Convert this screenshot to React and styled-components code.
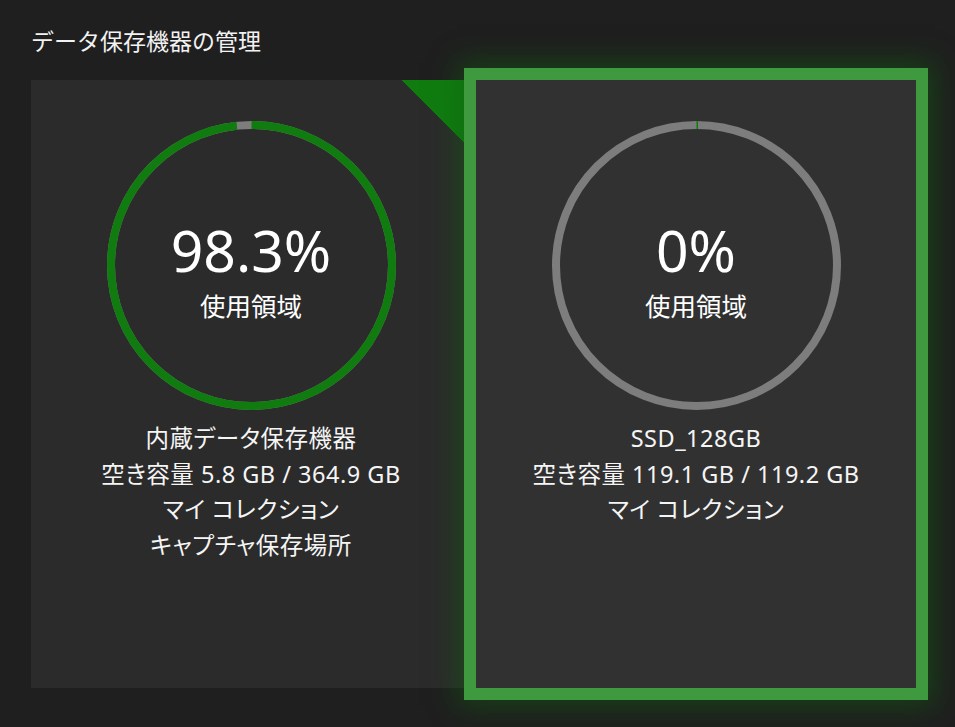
import React from 'react';
import styled, { createGlobalStyle } from 'styled-components';

const GlobalStyle = createGlobalStyle`
  html, body {
    margin: 0;
    background: #1f1f1f;
  }
  body {
    font-family: "Noto Sans", "Noto Sans CJK JP", sans-serif;
    color: #ffffff;
  }
`;

const RING = 289;
const STROKE = 8;

const drives = [
  {
    id: 'internal',
    used: 98.3,
    label: '98.3%',
    lines: ['内蔵データ保存機器', '空き容量 5.8 GB / 364.9 GB', 'マイ コレクション', 'キャプチャ保存場所'],
    corner: true,
  },
  {
    id: 'ssd',
    used: 0,
    label: '0%',
    lines: ['SSD_128GB', '空き容量 119.1 GB / 119.2 GB', 'マイ コレクション'],
    selected: true,
  },
];

const UsageRing = ({ used }) => {
  const r = (RING - STROKE) / 2;
  const c = 2 * Math.PI * r;
  const arc = used > 0 ? (c * used) / 100 : 1.5;
  return (
    <svg width={RING} height={RING} viewBox={`0 0 ${RING} ${RING}`}>
      <circle cx={RING / 2} cy={RING / 2} r={r} fill="none" stroke="#7d7d7d" strokeWidth={STROKE} />
      <circle
        cx={RING / 2}
        cy={RING / 2}
        r={r}
        fill="none"
        stroke="#107c10"
        strokeWidth={STROKE}
        strokeDasharray={`${arc} ${c}`}
        transform={`rotate(-90 ${RING / 2} ${RING / 2})`}
      />
    </svg>
  );
};

export default function App() {
  return (
    <>
      <GlobalStyle />
      <Page>
        <Title>データ保存機器の管理</Title>
        <CardRow>
          {drives.map((d) => (
            <DriveCard key={d.id} $selected={d.selected} $corner={d.corner}>
              <RingWrap>
                <UsageRing used={d.used} />
                <RingText>
                  <Percent>{d.label}</Percent>
                  <UsedLabel>使用領域</UsedLabel>
                </RingText>
              </RingWrap>
              <Details>
                {d.lines.map((l) => (
                  <div key={l}>{l}</div>
                ))}
              </Details>
            </DriveCard>
          ))}
        </CardRow>
      </Page>
    </>
  );
}

const Page = styled.div`
  padding: 26px 31px 0;
  height: 727px;
  box-sizing: border-box;
  overflow: hidden;
`;

const Title = styled.h1`
  margin: 0 0 24px;
  font-size: 23px;
  line-height: 30px;
  font-weight: 400;
  color: #f2f2f2;
`;

const CardRow = styled.div`
  display: flex;
  gap: 5px;
`;

const DriveCard = styled.div`
  position: relative;
  width: 440px;
  height: 608px;
  box-sizing: border-box;
  padding-top: 41px;
  display: flex;
  flex-direction: column;
  align-items: center;
  background: ${(p) => (p.$selected ? '#313131' : '#2b2b2b')};
  z-index: ${(p) => (p.$selected ? 2 : 1)};
  box-shadow: ${(p) =>
    p.$selected
      ? '0 0 0 12px #3f9a3f, 0 0 26px 18px rgba(16, 100, 16, 0.5)'
      : 'none'};

  &::after {
    content: '';
    display: ${(p) => (p.$corner ? 'block' : 'none')};
    position: absolute;
    top: 0;
    right: 0;
    width: 70px;
    height: 70px;
    background: linear-gradient(45deg, transparent 50%, #107c10 50%);
  }
`;

const RingWrap = styled.div`
  display: grid;
  width: ${RING}px;
  height: ${RING}px;
  & > * {
    grid-area: 1 / 1;
  }
`;

const RingText = styled.div`
  display: flex;
  flex-direction: column;
  align-items: center;
  justify-content: center;
  padding-top: 11px;
`;

const Percent = styled.div`
  font-size: 57px;
  line-height: 63px;
  font-weight: 400;
`;

const UsedLabel = styled.div`
  margin-top: 7px;
  font-size: 25.5px;
  line-height: 34px;
`;

const Details = styled.div`
  margin-top: 11px;
  text-align: center;
  font-size: 23.5px;
  letter-spacing: 0.5px;
  line-height: 35.5px;
  color: #f5f5f5;
  font-feature-settings: "palt";
`;
